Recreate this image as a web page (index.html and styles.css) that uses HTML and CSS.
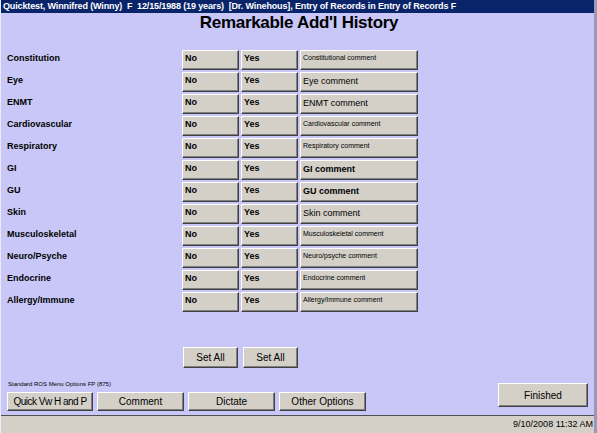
FILE: index.html
```html
<!DOCTYPE html>
<html>
<head>
<meta charset="utf-8">
<link rel="stylesheet" href="styles.css">
</head>
<body>
<div class="window">
  <div class="titlebar">Quicktest, Winnifred (Winny)&nbsp; F&nbsp; 12/15/1988 (19 years)&nbsp; [Dr. Winehous], Entry of Records in Entry of Records F</div>
  <div class="content">
    <h1 class="heading">Remarkable Add'l History</h1>
    <div class="rows">
      <div class="label">Constitution</div><div class="btn opt">No</div><div class="btn opt">Yes</div><div class="btn cmt small">Constitutional comment</div>
      <div class="label">Eye</div><div class="btn opt">No</div><div class="btn opt">Yes</div><div class="btn cmt">Eye comment</div>
      <div class="label">ENMT</div><div class="btn opt">No</div><div class="btn opt">Yes</div><div class="btn cmt">ENMT comment</div>
      <div class="label">Cardiovascular</div><div class="btn opt">No</div><div class="btn opt">Yes</div><div class="btn cmt small">Cardiovascular comment</div>
      <div class="label">Respiratory</div><div class="btn opt">No</div><div class="btn opt">Yes</div><div class="btn cmt small">Respiratory comment</div>
      <div class="label">GI</div><div class="btn opt">No</div><div class="btn opt">Yes</div><div class="btn cmt bold">GI comment</div>
      <div class="label">GU</div><div class="btn opt">No</div><div class="btn opt">Yes</div><div class="btn cmt bold">GU comment</div>
      <div class="label">Skin</div><div class="btn opt">No</div><div class="btn opt">Yes</div><div class="btn cmt">Skin comment</div>
      <div class="label">Musculoskeletal</div><div class="btn opt">No</div><div class="btn opt">Yes</div><div class="btn cmt small">Musculoskeletal comment</div>
      <div class="label">Neuro/Psyche</div><div class="btn opt">No</div><div class="btn opt">Yes</div><div class="btn cmt small">Neuro/psyche comment</div>
      <div class="label">Endocrine</div><div class="btn opt">No</div><div class="btn opt">Yes</div><div class="btn cmt small">Endocrine comment</div>
      <div class="label">Allergy/Immune</div><div class="btn opt">No</div><div class="btn opt">Yes</div><div class="btn cmt small">Allergy/Immune comment</div>
    </div>
    <div class="setall">
      <div class="btn push setbtn">Set All</div>
      <div class="btn push setbtn">Set All</div>
    </div>
    <div class="bottom">
      <div class="leftgroup">
        <div class="caption">Standard ROS Menu Options FP (875)</div>
        <div class="menu">
          <div class="btn push mbtn w86">Quick Vw H and P</div>
          <div class="btn push mbtn">Comment</div>
          <div class="btn push mbtn">Dictate</div>
          <div class="btn push mbtn">Other Options</div>
        </div>
      </div>
      <div class="btn push finished">Finished</div>
    </div>
  </div>
  <div class="status"><span class="clock">9/10/2008 11:32 AM</span></div>
</div>
</body>
</html>
```

FILE: styles.css
```css
* { box-sizing: border-box; }
html, body { margin: 0; padding: 0; }
body { font-family: "Liberation Sans", Arial, sans-serif; background: #c9c7f7; }

.window {
  width: 597px;
  height: 433px;
  display: flex;
  flex-direction: column;
  background: #c9c7f7;
  border-left: 1px solid #ecebfb;
  border-right: 3px solid #9a98b8;
  overflow: hidden;
}

.titlebar {
  height: 13px;
  background: #0a246a;
  color: #ffffff;
  font-weight: bold;
  font-size: 9px;
  line-height: 13px;
  letter-spacing: -0.13px;
  padding-left: 2px;
  white-space: nowrap;
  overflow: hidden;
}

.content {
  flex: 1;
  display: flex;
  flex-direction: column;
}

.heading {
  margin: 0;
  height: 20px;
  font-size: 17px;
  line-height: 20px;
  font-weight: bold;
  letter-spacing: -0.3px;
  text-align: center;
  color: #000;
  padding-left: 3px;
}

.rows {
  margin: 17px 0 0 6px;
  display: grid;
  grid-template-columns: 173px 57px 57px 118px;
  grid-auto-rows: 20px;
  column-gap: 2px;
  row-gap: 2px;
}

.label {
  font-size: 9px;
  font-weight: bold;
  line-height: 11px;
  padding-top: 3px;
  color: #000;
}

.btn {
  background: #d4d0c8;
  border: 1px solid;
  border-color: #ffffff #404040 #404040 #ffffff;
  box-shadow: inset -1px -1px 0 #808080;
  color: #000;
  white-space: nowrap;
  overflow: hidden;
}

.opt {
  font-size: 9px;
  font-weight: bold;
  line-height: 11px;
  padding: 2px 0 0 2px;
}

.cmt {
  font-size: 9px;
  line-height: 11px;
  padding: 3px 0 0 2px;
}
.cmt.small { font-size: 7px; line-height: 9px; padding-top: 2px; }
.cmt.bold { font-weight: bold; }

.push {
  font-size: 10px;
  text-align: center;
  display: flex;
  align-items: center;
  justify-content: center;
}

.setall {
  margin: 35px 0 0 182px;
  display: flex;
  gap: 5px;
}
.setbtn { width: 55px; height: 21px; }

.bottom {
  margin-top: auto;
  display: flex;
  align-items: flex-end;
  justify-content: space-between;
  padding: 0 6px 4px 6px;
}

.caption {
  font-size: 6px;
  line-height: 8px;
  margin-bottom: 4px;
  padding-left: 1px;
  white-space: nowrap;
}

.menu {
  display: flex;
  gap: 4px;
}
.mbtn { width: 87px; height: 19px; }
.mbtn.w86 { width: 86px; letter-spacing: -0.5px; }

.finished {
  width: 90px;
  height: 24px;
  margin-bottom: 4px;
}

.status {
  height: 18px;
  background: #d4d0c8;
  border-top: 1px solid #505050;
  display: flex;
  justify-content: flex-end;
  align-items: center;
  padding-right: 1px;
}
.clock {
  font-size: 9px;
  line-height: 11px;
}
```
